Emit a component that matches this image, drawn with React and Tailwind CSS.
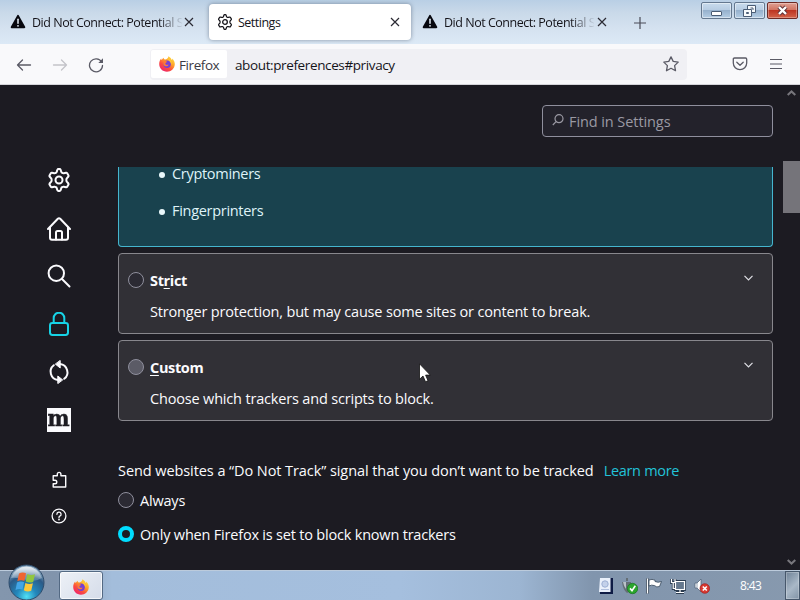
import React from 'react';
import clsx from 'clsx';

const GEAR =
  'M10.1 2.6 L10.5 1.5 Q10.7 1 11.3 1 L12.7 1 Q13.3 1 13.5 1.5 L14.3 3.9 Q14.5 4.5 15.1 4.8 L15.5 5 Q16 5.3 16.7 5.2 L19.1 4.7 Q19.8 4.6 20.2 5.2 L21.5 7.4 Q21.8 8 21.4 8.5 L19.8 10.4 Q19.4 10.9 19.4 11.5 L19.4 12.5 Q19.4 13.1 19.8 13.6 L21.4 15.5 Q21.8 16 21.5 16.6 L20.2 18.8 Q19.8 19.4 19.1 19.3 L16.7 18.8 Q16 18.7 15.5 19 L15.1 19.2 Q14.5 19.5 14.3 20.1 L13.5 22.5 Q13.3 23 12.7 23 L11.3 23 Q10.7 23 10.5 22.5 L9.7 20.1 Q9.5 19.5 8.9 19.2 L8.5 19 Q8 18.7 7.3 18.8 L4.9 19.3 Q4.2 19.4 3.8 18.8 L2.5 16.6 Q2.2 16 2.6 15.5 L4.2 13.6 Q4.6 13.1 4.6 12.5 L4.6 11.5 Q4.6 10.9 4.2 10.4 L2.6 8.5 Q2.2 8 2.5 7.4 L3.8 5.2 Q4.2 4.6 4.9 4.7 L7.3 5.2 Q8 5.3 8.5 5 L8.9 4.8 Q9.5 4.5 9.7 3.9 Z';

const Icon = ({ size = 24, width = 2, className, children }) => (
  <svg
    width={size}
    height={size}
    viewBox="0 0 24 24"
    fill="none"
    stroke="currentColor"
    strokeWidth={width}
    strokeLinecap="round"
    strokeLinejoin="round"
    className={clsx('shrink-0', className)}
  >
    {children}
  </svg>
);

const Gear = (props) => (
  <Icon {...props}>
    <path d={GEAR} />
    <circle cx="12" cy="12" r="3.5" />
  </Icon>
);

const Warning = () => (
  <svg width="16" height="16" viewBox="0 0 16 16" className="shrink-0">
    <path d="M8 1.9 L14.3 13.2 H1.7 Z" fill="#08080f" stroke="#08080f" strokeWidth="2" strokeLinejoin="round" />
    <path d="M8 5.2 V9.2" stroke="#e6eef7" strokeWidth="1.5" strokeLinecap="round" />
    <circle cx="8" cy="11.8" r="0.9" fill="#e6eef7" />
  </svg>
);

const Close = () => (
  <svg width="10" height="10" viewBox="0 0 10 10" className="shrink-0" stroke="#2b2a33" strokeWidth="1.2">
    <path d="M1 1 L9 9 M9 1 L1 9" />
  </svg>
);

const FirefoxLogo = ({ id, className }) => (
  <svg width="16" height="16" viewBox="0 0 16 16" className={clsx('shrink-0', className)}>
    <defs>
      <linearGradient id={id} x1="0.85" y1="0.05" x2="0.2" y2="0.95">
        <stop offset="0" stopColor="#ffe141" />
        <stop offset="0.35" stopColor="#ffa52a" />
        <stop offset="0.68" stopColor="#fb4b3e" />
        <stop offset="1" stopColor="#ec2470" />
      </linearGradient>
    </defs>
    <path
      d="M9.4 0.2 C11.5 1.5 12.3 2.6 12.7 4 C13.3 3.7 13.2 3 13 2.5 C15 4.1 16 6.3 15.8 8.6 C15.4 12.8 12.2 15.8 8 15.8 C3.6 15.8 0.2 12.5 0.2 8.1 C0.2 5.7 1.1 3.8 2.2 2.6 C2.2 3.2 2.3 3.7 2.7 4 C3.2 3 3.8 2.2 4.7 1.7 C4.7 2.7 5.2 3.3 6 3.6 C7.5 3.2 9.5 2.2 9.4 0.2 Z"
      fill={`url(#${id})`}
    />
    <circle cx="8.1" cy="8.2" r="3.7" fill="#7540d5" />
    <path d="M4.3 5.3 C5.7 4.3 7 5 7.8 5.6 C8.2 6.4 7 6.8 6.4 7.2 C6.3 8.7 7.8 9.3 9.6 8.4 C9.1 10.6 5.8 11 4.4 8.8 Z" fill="#ff7a35" />
    <path d="M8.5 3 C11.5 3.2 13.1 5.8 12.5 8.7 C12 6.4 10.6 4.8 8.5 3 Z" fill="#ffcb38" />
  </svg>
);

const TabTitle = ({ children }) => (
  <span className="mt-[3px] ml-[6px] w-[150px] shrink-0 whitespace-nowrap text-[12.5px] tracking-[-0.48px] text-[#15141a] [mask-image:linear-gradient(to_right,#000_84%,transparent_101%)]">
    {children}
  </span>
);

const TabBar = () => (
  <div className="flex h-[44px] bg-[linear-gradient(to_bottom,#b9cfe5_0%,#c9d9e9_28%,#d5e2f0_65%,#dce9f6_100%)]">
    <div className="flex w-[209px] items-center pl-[10px]">
      <Warning />
      <TabTitle>Did Not Connect: Potential S</TabTitle>
      <span className="ml-0.5">
        <Close />
      </span>
    </div>
    <div className="mt-[4px] flex h-[36px] w-[202px] items-center rounded-[4px] bg-white pl-[8px] shadow-[0_0_4px_rgba(60,75,95,0.55)]">
      <Gear size={16} width={1.9} className="text-[#15141a]" />
      <span className="mt-[2px] ml-[5px] text-[12.5px] tracking-[-0.5px] text-[#15141a]">Settings</span>
      <span className="mr-[11px] ml-auto">
        <Close />
      </span>
    </div>
    <div className="flex w-[212px] items-center pl-[11px]">
      <Warning />
      <TabTitle>Did Not Connect: Potential S</TabTitle>
      <span className="ml-[3px]">
        <Close />
      </span>
    </div>
    <svg width="12" height="12" viewBox="0 0 12 12" className="mt-[17px] ml-[11px] shrink-0" stroke="#4a4b57" strokeWidth="1.2">
      <path d="M6 0 V12 M0 6 H12" />
    </svg>
    <WindowButtons />
  </div>
);

const WindowButtons = () => (
  <div className="mt-[2px] mr-[2px] ml-auto flex h-[17px] gap-[2px]">
    <div className="flex w-[31px] items-center justify-center rounded-[2px] border border-[#64788f] bg-[linear-gradient(#c8dbed_0%,#b6cce2_48%,#96b1cd_50%,#b4cde4_100%)] pt-[5px] shadow-[inset_0_0_0_1px_rgba(255,255,255,0.45)]">
      <span className="h-[5px] w-[11px] rounded-[1px] border border-[#4a5c74] bg-white" />
    </div>
    <div className="flex w-[31px] items-center justify-center rounded-[2px] border border-[#64788f] bg-[linear-gradient(#c8dbed_0%,#b6cce2_48%,#96b1cd_50%,#b4cde4_100%)] shadow-[inset_0_0_0_1px_rgba(255,255,255,0.45)]">
      <svg width="13" height="12" viewBox="0 0 13 12" fill="#f7fafc" stroke="#4a5c74">
        <path d="M4.5 0.5 H12.5 V7.5 H4.5 Z" />
        <path d="M7.5 3 H10 V5" fill="none" />
        <path d="M0.5 4.5 H8.5 V11.5 H0.5 Z" />
        <path d="M3.5 7.5 H5.5 V8.5 H3.5 Z" fill="#91abc6" />
      </svg>
    </div>
    <div className="flex w-[31px] items-center justify-center rounded-[2px] border border-[#6d2a25] bg-[linear-gradient(#dfa094_0%,#d27462_45%,#bd3522_50%,#d3644a_100%)] shadow-[inset_0_0_0_1px_rgba(255,255,255,0.3)]">
      <svg width="13" height="11" viewBox="0 0 13 11">
        <path d="M3 2 L10 9 M10 2 L3 9" stroke="#60343a" strokeWidth="4.3" />
        <path d="M3 2 L10 9 M10 2 L3 9" stroke="#fff" strokeWidth="2.4" />
      </svg>
    </div>
  </div>
);

const NavBar = () => (
  <div className="flex h-[41px] items-center border-b border-[#d5d5da] bg-[#f9f9fb] text-[#5b5b66]">
    <svg width="16" height="16" viewBox="0 0 16 16" className="mt-px ml-[16px] shrink-0" fill="none" stroke="currentColor" strokeWidth="1.3" strokeLinecap="round" strokeLinejoin="round">
      <path d="M14.5 8 H1.5 M6.5 3 L1.5 8 L6.5 13" />
    </svg>
    <svg width="16" height="16" viewBox="0 0 16 16" className="mt-px ml-[20px] shrink-0 text-[#c4c4c9]" fill="none" stroke="currentColor" strokeWidth="1.3" strokeLinecap="round" strokeLinejoin="round">
      <path d="M1.5 8 H14.5 M9.5 3 L14.5 8 L9.5 13" />
    </svg>
    <svg width="16" height="16" viewBox="0 0 16 16" className="mt-px ml-[20px] shrink-0" fill="none" stroke="currentColor" strokeWidth="1.3" strokeLinecap="round">
      <path d="M13.6 5 A6.5 6.5 0 1 0 14.5 8.4" />
      <path d="M15 1.3 V6 H10.3 Z" fill="currentColor" stroke="none" />
    </svg>
    <div className="ml-[46px] flex h-[31px] w-[537px] items-center rounded-[4px] bg-[#f0f0f4] p-px">
      <div className="flex h-[28px] w-[76px] items-center rounded-[2px] bg-white pl-[8px]">
        <FirefoxLogo id="ff-url" />
        <span className="mt-[2px] ml-[4px] text-[13.5px] tracking-[-0.42px] text-[#3b3a44]">Firefox</span>
      </div>
      <span className="mt-[2px] ml-[8px] text-[13.5px] tracking-[-0.38px] text-[#15141a]">about:preferences#privacy</span>
      <svg width="16" height="16" viewBox="0 0 16 16" className="mr-[7px] ml-auto" fill="none" stroke="currentColor" strokeWidth="1.3" strokeLinejoin="round">
        <path d="M8 0.9 L10.2 5.4 L15.2 6.1 L11.6 9.6 L12.5 14.7 L8 12.3 L3.5 14.7 L4.4 9.6 L0.8 6.1 L5.8 5.4 Z" />
      </svg>
    </div>
    <svg width="16" height="16" viewBox="0 0 16 16" className="ml-[45px] shrink-0" fill="none" stroke="currentColor" strokeWidth="1.3" strokeLinecap="round" strokeLinejoin="round">
      <path d="M2.5 2 H13.5 Q14.7 2 14.7 3.2 V7 A6.7 6.7 0 0 1 1.3 7 V3.2 Q1.3 2 2.5 2 Z" />
      <path d="M4.8 6.3 L8 9.3 L11.2 6.3" />
    </svg>
    <svg width="12" height="12" viewBox="0 0 12 12" className="ml-[22px] shrink-0" stroke="currentColor" strokeWidth="1.2">
      <path d="M0 1.5 H12 M0 6 H12 M0 10.5 H12" />
    </svg>
  </div>
);

const Sidebar = () => (
  <div className="flex w-[118px] flex-col items-center pt-[83px] text-[#fbfbfe]">
    <Gear width={2} />
    <Icon className="mt-[25px] -ml-px">
      <path d="M1 12 L10.8 1.8 Q12 0.7 13.2 1.8 L23 12" />
      <path d="M3 10.5 V20.8 Q3 22.8 5 22.8 H19 Q21 22.8 21 20.8 V10.5" />
      <path d="M9 22.5 V15.5 Q9 14 10.5 14 H13.5 Q15 14 15 15.5 V22.5" />
    </Icon>
    <Icon className="mt-[23px]">
      <circle cx="9.3" cy="9.2" r="7.7" />
      <path d="M15 15 L22.5 22.5" />
    </Icon>
    <Icon className="mt-[24px] text-[#17d3e6]">
      <rect x="3" y="11" width="18" height="12" rx="2.4" />
      <path d="M6.7 11 V6 A5.3 5.3 0 0 1 17.3 6 V11" />
    </Icon>
    <Icon className="mt-[24px]">
      <path d="M6.8 5.2 A8.3 8.3 0 0 0 11 20 M17.2 18.8 A8.3 8.3 0 0 0 13 4" />
      <path d="M13.2 0.8 V8 L8.6 4.3 Z M10.8 23.2 V16 L15.4 19.7 Z" fill="currentColor" strokeWidth="1" />
    </Icon>
    <div className="mt-[24px] flex h-[24px] w-[24px] items-center justify-center bg-[#fbfbfe] pb-[4px] font-['DejaVu_Serif','Noto_Sans',serif] text-[22px] leading-none font-bold text-[#1c1b22]">
      <span className="inline-block scale-x-[0.95] [-webkit-text-stroke:0.4px_#1c1b22]">m</span>
    </div>
    <svg width="16" height="18" viewBox="0 0 16 18" className="mt-[39px]" fill="none" stroke="currentColor" strokeWidth="1.4" strokeLinejoin="round">
      <path d="M2.2 6.7 V4.8 H6.3 V3.2 A1.8 1.8 0 0 1 9.9 3.2 V4.8 H14.7 V16 H2.2 V12.8 H4 A1.8 1.8 0 0 0 4 9.2 H2.2 V6.7" />
    </svg>
    <svg width="16" height="16" viewBox="0 0 16 16" className="mt-[19px] -ml-px" fill="none" stroke="currentColor" strokeWidth="1.3" strokeLinecap="round">
      <circle cx="8" cy="8" r="6.9" />
      <path d="M5.9 6.3 A2.1 2.1 0 1 1 8.8 8.2 Q8 8.6 8 9.4" />
      <circle cx="8" cy="11.6" r="0.35" fill="currentColor" />
    </svg>
  </div>
);

const Radio = ({ checked, hover }) => (
  <span
    className={clsx(
      'mb-[2px] h-[16px] w-[16px] shrink-0 rounded-full',
      checked ? 'border-[4px] border-[#00ddff] bg-[#1c1b22]' : 'border border-[#8f8f9d]',
      !checked && (hover ? 'bg-[#5b5b66]' : 'bg-[#2b2a33]')
    )}
  />
);

const Category = ({ label, text, hover }) => (
  <div className="h-[81px] w-[655px] rounded-[4px] border border-[#88878d] bg-[#313036]">
    <div className="mt-[15px] flex h-[23px] items-center pr-[19px] pl-[9px]">
      <Radio hover={hover} />
      <span className="ml-[6px] text-[14.5px] font-bold tracking-[-0.35px]">{label}</span>
      <svg width="9" height="6" viewBox="0 0 9 6" className="mb-[5px] ml-auto" fill="none" stroke="#e0e0e6" strokeWidth="1.2">
        <path d="M0.5 0.8 L4.5 4.8 L8.5 0.8" />
      </svg>
    </div>
    <p className="mt-[9px] ml-[31px] leading-[22px] tracking-[-0.175px]">{text}</p>
  </div>
);

const Preferences = () => (
  <div className="flex w-[655px] flex-col text-[14.5px] tracking-[-0.2px] whitespace-nowrap text-[#fbfbfe]">
    <div className="flex h-[82px] justify-end pt-[20px]">
      <div className="flex h-[32px] w-[231px] items-center rounded-[4px] border border-[#8f8f9d] bg-[#23222b] pl-[9px] text-[#9a99a3]">
        <svg width="12" height="12" viewBox="0 0 12 12" className="mb-[3px]" fill="none" stroke="currentColor" strokeWidth="1.2">
          <circle cx="7" cy="4.7" r="4" />
          <path d="M4.1 7.6 L0.8 11" />
        </svg>
        <span className="mt-[2px] ml-[5px] tracking-[-0.08px]">Find in Settings</span>
      </div>
    </div>
    <ul className="h-[80px] rounded-b-[4px] border border-t-0 border-[#45b6cf] bg-[#19424e] text-[#dff3f8]">
      {['Cryptominers', 'Fingerprinters'].map((item) => (
        <li key={item} className="-mt-[4px] mb-[19px] flex h-[22px] items-center pl-[40px]">
          <span className="mt-[2px] h-[6px] w-[6px] rounded-full bg-[#e9f8fb]" />
          <span className="ml-[7px] tracking-[-0.3px]">{item}</span>
        </li>
      ))}
    </ul>
    <div className="mt-[6px] flex flex-col gap-[6px]">
      <Category
        label={<>St<span className="underline decoration-1 underline-offset-2">r</span>ict</>}
        text="Stronger protection, but may cause some sites or content to break."
      />
      <Category
        hover
        label={<><span className="underline decoration-1 underline-offset-2">C</span>ustom</>}
        text="Choose which trackers and scripts to block."
      />
    </div>
    <p className="mt-[39px] leading-[22px] tracking-[-0.075px]">
      Send websites a “Do Not Track” signal that you don’t want to be tracked
      <span className="ml-[10px] tracking-[-0.3px] text-[#22c3d9]">Learn more</span>
    </p>
    <label className="mt-[8px] flex h-[22px] items-center gap-[6px]">
      <Radio />
      Always
    </label>
    <label className="mt-[12px] flex h-[22px] items-center gap-[6px]">
      <Radio checked />
      Only when Firefox is set to block known trackers
    </label>
  </div>
);

const Scrollbar = () => (
  <div className="ml-auto flex w-[17px] flex-col items-center">
    <svg width="9" height="6" viewBox="0 0 9 6" className="mt-[5px]" fill="none" stroke="#77767c" strokeWidth="2">
      <path d="M0.7 5 L4.5 1.4 L8.3 5" />
    </svg>
    <div className="mt-[65px] h-[52px] w-full bg-[#75747a]" />
    <svg width="9" height="6" viewBox="0 0 9 6" className="mt-auto mb-[5px]" fill="none" stroke="#77767c" strokeWidth="2">
      <path d="M0.7 1 L4.5 4.6 L8.3 1" />
    </svg>
  </div>
);

const StartOrb = () => (
  <svg width="38" height="36" viewBox="0 0 38 36" className="absolute bottom-0 left-[7px]">
    <defs>
      <radialGradient id="orb" cx="0.5" cy="0.9" r="0.8">
        <stop offset="0" stopColor="#52e0f4" />
        <stop offset="0.35" stopColor="#2388bc" />
        <stop offset="0.75" stopColor="#2b5a87" />
        <stop offset="1" stopColor="#87a6bf" />
      </radialGradient>
      <linearGradient id="orb-shine" x1="0" y1="0" x2="0" y2="1">
        <stop offset="0" stopColor="#fff" stopOpacity="0.8" />
        <stop offset="1" stopColor="#fff" stopOpacity="0.15" />
      </linearGradient>
    </defs>
    <circle cx="19.5" cy="18.5" r="17.5" fill="url(#orb)" stroke="#2f4d6c" />
    <path d="M4 14 A16.2 16.2 0 0 1 35 14 Q27 19 19 16 Q10 13 4 14 Z" fill="url(#orb-shine)" />
    <path d="M12 9.5 Q15.5 7.5 19 9.3 L17.4 17 Q14 15.4 10.3 17.2 Z" fill="#ef6531" />
    <path d="M20.3 10 Q23.8 12 28 10.3 L26.2 18 Q22.2 19.4 18.7 17.6 Z" fill="#91c640" />
    <path d="M10 18.5 Q13.7 16.8 17.1 18.3 L15.5 25.5 Q12 24.3 8.5 25.9 Z" fill="#43a5e6" />
    <path d="M18.4 19 Q22 20.7 25.9 19.3 L24.2 26.8 Q20.5 28.4 16.8 26.3 Z" fill="#fcc83a" />
  </svg>
);

const TrayIcons = () => (
  <div className="flex items-center gap-[8px] pt-px">
    <svg width="16" height="18" viewBox="0 0 16 18">
      <path d="M3 1 H15 V17 H2 V15 H3 Z" fill="#0e1b44" />
      <path d="M2 1 H12.5 V15 H1 Z" fill="#e9f0fb" />
      <circle cx="7" cy="7" r="3.2" fill="#c3d1ea" stroke="#9db0d4" />
      <path d="M3 12.5 H11" stroke="#b0c0de" />
    </svg>
    <svg width="16" height="18" viewBox="0 0 16 18">
      <path d="M4 1 H6 V4 H4 Z M0 5 H9 V10 Q8 15 5 16 Q1 13 0 5 Z" fill="#646e75" />
      <path d="M1 5 H4 V12 Q2 10 1 5 Z" fill="#b9c2c8" />
      <circle cx="10.5" cy="11.5" r="5.2" fill="#2ba52d" stroke="#16761e" strokeWidth="0.7" />
      <path d="M8 11.4 L10 13.6 L13.3 8.8" fill="none" stroke="#fff" strokeWidth="1.6" />
    </svg>
    <svg width="16" height="18" viewBox="0 0 16 18">
      <path d="M1.5 1.5 V16.5" stroke="#26374b" strokeWidth="3" />
      <path d="M1.5 1.5 V16.5" stroke="#fff" strokeWidth="1.5" />
      <path d="M3 3 Q6 1.6 9 3.2 V4.5 Q12 6 15.5 4.5 L13.5 9.5 Q10.5 10.7 8.5 8.6 Q5.5 7.5 3 9 Z" fill="#fff" stroke="#34465b" strokeWidth="0.8" />
    </svg>
    <svg width="16" height="18" viewBox="0 0 16 18" fill="none">
      <path d="M5.5 4.5 H14.5 V12.5 H5.5 Z M10 13 V15.5 M6 15.5 H14 M1.5 2 V5.5 H5 V2 M3.2 6 V11.5 H5" stroke="#2b3c50" strokeWidth="2.8" />
      <path d="M5.5 4.5 H14.5 V12.5 H5.5 Z" fill="#65788d" />
      <path d="M5.5 4.5 H14.5 V12.5 H5.5 Z M10 13 V15.5 M6 15.5 H14 M1.5 2 V5.5 H5 V2 M3.2 6 V11.5 H5" stroke="#fff" strokeWidth="1.2" />
    </svg>
    <svg width="16" height="18" viewBox="0 0 16 18">
      <path d="M1 6 H3 L7 2 V15 L3 11 H1 Z" fill="#fff" stroke="#53667b" strokeWidth="0.8" />
      <path d="M3 5.5 V11.5" stroke="#7b8ea3" strokeWidth="0.8" />
      <circle cx="10.8" cy="11.5" r="4.8" fill="#d83931" stroke="#9d1f20" strokeWidth="0.7" />
      <path d="M8.8 9.5 L12.8 13.5 M12.8 9.5 L8.8 13.5" stroke="#fff" strokeWidth="1.6" />
    </svg>
  </div>
);

const Taskbar = () => (
  <div className="relative flex h-[30px] items-center border-t border-[#bccbdc] bg-[linear-gradient(to_right,#8396ad_0%,#8194ac_7%,#a3bddb_14%,#a5bfde_50%,#9cb5d2_65%,#8195ad_74%,#8799ae_100%)]">
    <StartOrb />
    <div className="ml-[59px] flex h-[29px] w-[44px] items-center justify-center rounded-[3px] border border-[#536983] bg-[linear-gradient(135deg,#edf1f7,#d5dce9)] pt-[2px] shadow-[inset_0_0_0_1px_rgba(255,255,255,0.7)]">
      <FirefoxLogo id="ff-task" />
    </div>
    <div className="ml-auto flex h-full items-center">
      <TrayIcons />
      <span className="ml-[30px] w-[23px] text-[12px] tracking-[-0.6px] whitespace-nowrap text-white">8:43</span>
      <div className="ml-[22px] h-full w-[15px] border border-[#46576b] bg-[linear-gradient(135deg,#6f8297,#a9b8c7_55%,#8193a6)] shadow-[inset_0_0_0_1px_rgba(255,255,255,0.25)]" />
    </div>
  </div>
);

// Pointer resting over the "Custom" category
const Cursor = () => (
  <svg width="12" height="20" viewBox="0 0 12 20" className="absolute top-[363px] left-[419px]">
    <path d="M0.5 0.8 V16.3 L4 13 L6.5 18.8 L9 17.7 L6.6 12.1 H11.3 Z" fill="#fff" stroke="#111" strokeWidth="0.8" />
  </svg>
);

const App = () => {
  return (
    <div className="relative flex h-[600px] w-[800px] flex-col overflow-hidden bg-[#1c1b22] font-['Open_Sans','Noto_Sans',sans-serif]">
      <TabBar />
      <NavBar />
      <div className="flex h-[485px] shrink-0">
        <Sidebar />
        <Preferences />
        <Scrollbar />
      </div>
      <Taskbar />
      <Cursor />
    </div>
  );
};

export default App;
